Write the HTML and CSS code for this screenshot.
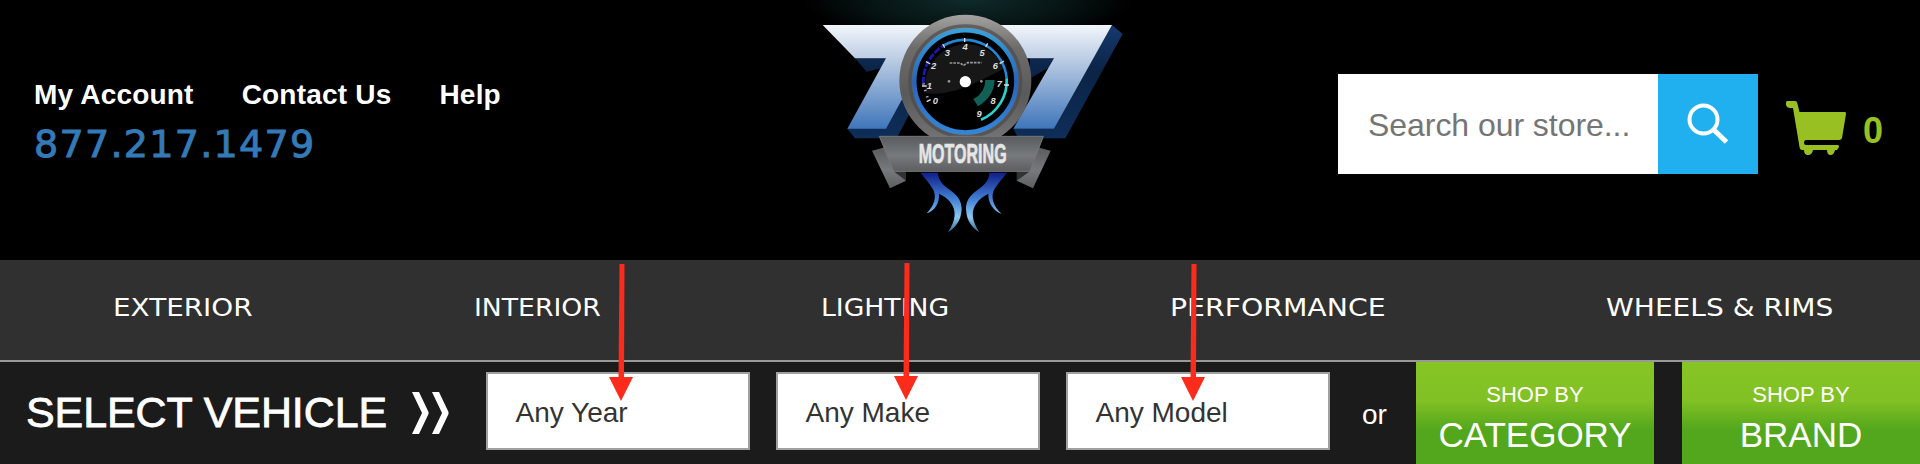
FILE: index.html
```html
<!DOCTYPE html>
<html lang="en">
<head>
<meta charset="utf-8">
<title>707 Motoring</title>
<link rel="stylesheet" href="styles.css">
</head>
<body>
<header class="header">
  <div class="contact">
    <nav class="account"><a>My Account</a><a>Contact Us</a><a>Help</a></nav>
    <a class="phone">877.217.1479</a>
  </div>
  <svg class="logo" width="340" height="240" viewBox="0 0 1020 720">
    <defs>
      <radialGradient id="glow" cx=".5" cy="0" r=".5"><stop offset="0" stop-color="#0f2a2a"/><stop offset=".6" stop-color="#071414"/><stop offset="1" stop-color="#000"/></radialGradient>
      <linearGradient id="seven" x1="0" y1="75" x2="0" y2="390" gradientUnits="userSpaceOnUse"><stop offset="0" stop-color="#f2f6fb"/><stop offset=".3" stop-color="#c0d0e6"/><stop offset="1" stop-color="#3d74b9"/></linearGradient>
      <linearGradient id="side" x1="0" y1="75" x2="0" y2="415" gradientUnits="userSpaceOnUse"><stop offset="0" stop-color="#143a6e"/><stop offset=".4" stop-color="#0b2447"/><stop offset="1" stop-color="#0e2d58"/></linearGradient>
      <linearGradient id="rim" x1="0" y1="0" x2="0" y2="1"><stop offset="0" stop-color="#a5a3a1"/><stop offset=".25" stop-color="#6e6c6b"/><stop offset=".6" stop-color="#5b5a5a"/><stop offset="1" stop-color="#777"/></linearGradient>
      <linearGradient id="ring" x1="0" y1="0" x2="0" y2="1"><stop offset="0" stop-color="#35a0dc"/><stop offset=".5" stop-color="#2764bd"/><stop offset="1" stop-color="#3186dc"/></linearGradient>
      <linearGradient id="ribbon" x1="0" y1="0" x2="0" y2="1"><stop offset="0" stop-color="#595c5e"/><stop offset=".55" stop-color="#777a7c"/><stop offset="1" stop-color="#5c5e60"/></linearGradient>
      <linearGradient id="flame" x1="0" y1="520" x2="0" y2="695" gradientUnits="userSpaceOnUse"><stop offset="0" stop-color="#10218a"/><stop offset=".45" stop-color="#4482d6"/><stop offset=".75" stop-color="#8cc8f0"/><stop offset="1" stop-color="#3b6c94"/></linearGradient>
    </defs>
    <rect x="20" width="970" height="260" fill="url(#glow)"/>
    <path fill="url(#side)" d="M165 175H258L285 195 200 215ZM142 386 165 415H290L350 300 300 290ZM690 175H762L770 190 690 235ZM936 75 968 102 796 415H655L640 386H762Z"/>
    <path fill="url(#seven)" d="M68 75H430V300H305L258 386H142L258 175H165ZM560 75H936L762 386H640L762 175H560Z"/>
    <circle cx="496" cy="242" r="198" fill="url(#rim)"/>
    <circle cx="496" cy="244" r="166" fill="none" stroke="#4b4a4a" stroke-width="10" stroke-opacity=".7"/>
    <circle cx="496" cy="244" r="153" fill="#000" stroke="url(#ring)" stroke-width="13"/>
    <path d="M378 278C440 295 540 245 613 205A124 124 0 0 0 378 278" fill="#171717"/>
    <g fill="none" stroke-width="8">
      <path stroke="#1c17b9" stroke-dasharray="20 5" d="M370 250A126 126 0 0 1 432 136"/>
      <path stroke="#2186d5" d="M432 136A126 126 0 0 1 620 235"/>
      <path stroke="#29d5cb" d="M620 235A126 126 0 0 1 543 359"/>
      <path stroke="#aaa" stroke-dasharray="4 16" d="M370 250 386 306"/>
    </g>
    <path stroke="#ddd" stroke-width="4" d="M494 114V126M428 132 434 143M563 130 557 141M378 185 391 192M612 183 599 191M366 258H380M627 255H612M380 305 392 299"/>
    <path d="M556 240H584Q582 290 534 319L520 297Q555 280 556 240Z" fill="#116055"/>
    <g class="dial"><text x="406" y="312">0</text><text x="388" y="266">1</text><text x="401" y="208">2</text><text x="442" y="167">3</text><text x="495" y="150">4</text><text x="546" y="168">5</text><text x="586" y="207">6</text><text x="598" y="262">7</text><text x="579" y="313">8</text><text x="537" y="350">9</text></g>
    <path d="M449 189H480L491 196 503 188H545" stroke="#999" stroke-width="5" stroke-dasharray="8 3" fill="none"/>
    <circle cx="496" cy="245" r="17" fill="#fff"/><circle cx="447" cy="244" r="4" fill="#999"/><circle cx="544" cy="244" r="4" fill="#999"/>
    <path d="M216 452 255 442 318 542 270 565ZM752 452 712 442 650 542 699 565Z" fill="url(#ribbon)"/>
    <path d="M281 514H318V542ZM690 514H650V542Z" fill="#303335"/>
    <path d="M238 409H730L690 514H281Z" fill="url(#ribbon)" stroke="#777" stroke-width="3"/>
    <text class="motoring" x="488" y="489" textLength="264" lengthAdjust="spacingAndGlyphs">MOTORING</text>
    <path fill="url(#flame)" d="M362 518H414C415 570 486 568 485 628C483 665 465 683 444 697C465 665 474 632 448 603C439 592 428 587 417 581C419 608 405 632 380 640C402 618 412 590 398 566C387 547 374 535 362 518ZM621 518H568C567 570 497 568 498 628C500 665 517 683 538 697C517 665 508 632 535 603C544 592 555 587 565 581C564 608 579 632 605 642C580 618 570 590 584 566C595 547 609 535 621 518Z"/>
  </svg>
  <div class="tools">
    <form class="search">
      <span class="field">Search our store...</span>
      <span class="go"><svg width="100" height="100"><g fill="none" stroke="#fff" stroke-width="4"><circle cx="45.5" cy="45.5" r="14"/><path d="M55.5 55.5 68.500 68" stroke-width="5"/></g></svg></span>
    </form>
    <svg class="cart" width="60" height="56" viewBox="0 0 60 56"><path fill="#99c023" d="M1 0H9Q11 0 11.5 3L13.5 11H59Q60 11 60 13L56 37Q55.500 39 53 39H20Q18 39 18 41.500T20 44H52Q53 44 53 46L51 49H49Q48 54 44.500 54T41 49H27Q26 54 22 54T18 49H16Q14 49 13.500 46L7 7H4Q1 7 0 4V1Z"/></svg>
    <span class="count">0</span>
  </div>
</header>
<nav class="menu"><a class="exterior"><span>EXTERIOR</span></a><a class="interior"><span>INTERIOR</span></a><a class="lighting"><span>LIGHTING</span></a><a class="performance"><span>PERFORMANCE</span></a><a class="wheels"><span>WHEELS &amp; RIMS</span></a></nav>
<section class="vehicle">
  <h1 class="title">SELECT VEHICLE</h1>
  <svg class="chevrons" width="37" height="42" viewBox="0 0 37 42"><path fill="#fff" d="M0 0H7L16.500 20V22L7 42H0L10 21ZM20 0H27L36.500 20V22L27 42H20L30 21Z"/></svg>
  <div class="selects"><div class="select">Any Year</div><div class="select">Any Make</div><div class="select">Any Model</div></div>
  <span class="or">or</span>
  <div class="shops"><a class="shop"><small>SHOP BY</small><b>CATEGORY</b></a><a class="shop"><small>SHOP BY</small><b>BRAND</b></a></div>
</section>
<svg class="arrows" width="1920" height="464"><g fill="#fc2b1c"><path d="M619.500 264H624.500L624 377H633L621 401 609 377H618.500Z"/><path d="M904.500 263H909.500L909 376H918L906 400 894 376H903.500Z"/><path d="M1191.500 264H1196.500L1196 377H1205L1193 401 1181 377H1190.500Z"/></g></svg>
</body>
</html>
```
FILE: styles.css
```css
* { box-sizing: border-box; }
body { margin: 0; width: 1920px; height: 464px; overflow: hidden; background: #000; color: #fff; font-family: "Liberation Sans", Arial, sans-serif; position: relative; }
svg { display: block; flex: none; }
.header { height: 260px; display: grid; grid-template-columns: 800px 340px 780px; }
.contact { padding: 79px 0 0 34px; }
.account { display: flex; gap: 48px; font-size: 28px; line-height: 32px; font-weight: bold; letter-spacing: .2px; }
.phone { display: block; width: 290px; margin-top: 9px; font: 38px/48px "DejaVu Sans", sans-serif; letter-spacing: 1.3px; color: #337ab7; -webkit-text-stroke: 1px #337ab7; white-space: nowrap; }
.tools { display: flex; align-items: flex-start; padding: 74px 0 0 198px; }
.search { display: flex; width: 420px; height: 100px; }
.field { width: 320px; padding-left: 30px; background: #fff; color: #757575; font-size: 32px; line-height: 103px; letter-spacing: -.05px; }
.go { width: 100px; background: #20b0ef; }
.cart { margin: 27px 0 0 28px; }
.count { margin: 36px 0 0 17px; font-size: 36px; line-height: 41px; font-weight: bold; color: #99c023; }
.dial { fill: #ddd; font: italic bold 28px "Liberation Sans", sans-serif; text-anchor: middle; }
.motoring { fill: #e6e6e6; stroke: #e6e6e6; stroke-width: 2px; font: bold 84px "Liberation Sans", sans-serif; text-anchor: middle; }
.menu { height: 102px; padding: 32px 0 0 113px; background: #303030; border-bottom: 2px solid #999; display: flex; gap: 222.5px; font: 24px/32px "DejaVu Sans", sans-serif; white-space: nowrap; }
.menu a { flex: none; }
.menu span { display: inline-block; transform-origin: left; }
.exterior { width: 138px; }
.interior { width: 125px; }
.lighting { width: 126px; }
.performance { width: 214px; }
.wheels { width: 226px; }
.exterior span { transform: scaleX(1.16); }
.interior span { transform: scaleX(1.11); }
.lighting span { transform: scaleX(1.11); }
.performance span { transform: scaleX(1.18); }
.wheels span { transform: scaleX(1.17); }
.vehicle { height: 102px; display: flex; align-items: flex-start; background: #1b1b1b; }
.title { margin: 26px 0 0; padding-left: 26px; width: 412px; font-size: 43px; line-height: 48px; font-weight: normal; letter-spacing: -.1px; -webkit-text-stroke: .8px #fff; white-space: nowrap; }
.chevrons { margin-top: 30px; }
.selects { display: flex; gap: 26px; margin: 10px 0 0 37px; }
.select { width: 264px; height: 78px; border: 2px solid #a0a0a0; background: #fff; color: #333; padding-left: 27.5px; font-size: 28px; line-height: 77px; }
.or { margin: 37px 0 0 32px; width: 54px; font-size: 28px; line-height: 32px; }
.shops { display: flex; gap: 28px; }
.shop { width: 238px; height: 102px; padding-top: 20px; text-align: center; background: linear-gradient(#86c524, #82c124 38px, #53a71d 68px, #53a71d); }
.shop small { display: block; font-size: 22px; line-height: 25px; }
.shop b { display: block; margin-top: 8px; font-size: 35px; line-height: 40px; font-weight: normal; }
.arrows { position: absolute; left: 0; top: 0; pointer-events: none; }
```
